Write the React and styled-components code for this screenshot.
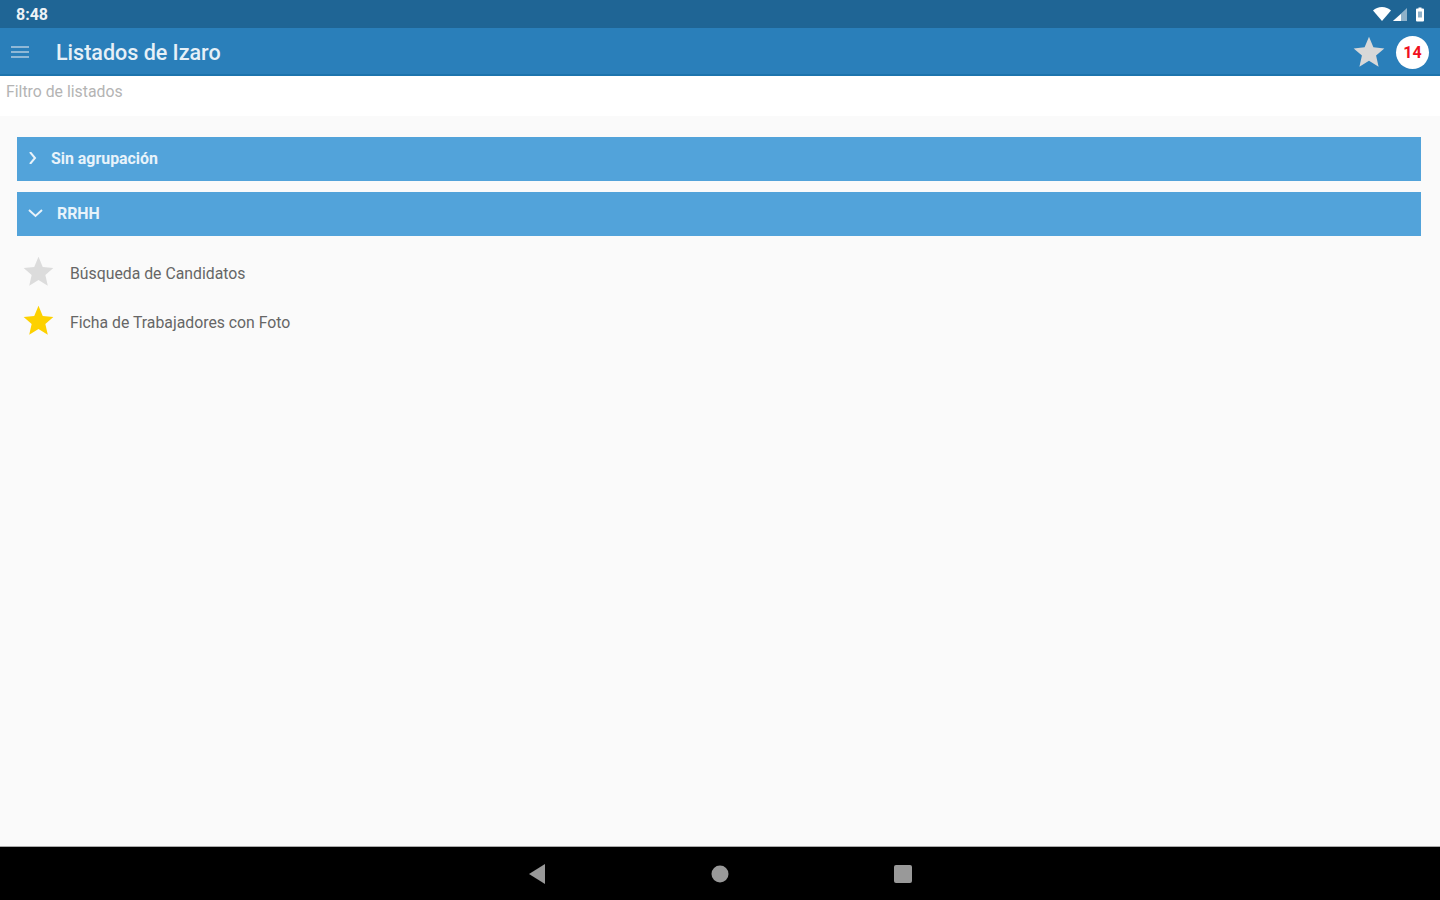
import React from 'react';
import styled, { createGlobalStyle } from 'styled-components';

const GlobalStyle = createGlobalStyle`
  html, body {
    margin: 0;
    padding: 0;
    background: #fafafa;
    font-family: Roboto, "Liberation Sans", sans-serif;
  }
`;

const Screen = styled.div`
  width: 1440px;
  height: 900px;
  display: flex;
  flex-direction: column;
  overflow: hidden;
  background: #fafafa;
`;

const StatusBar = styled.div`
  height: 28px;
  flex: none;
  background: #1f6595;
  color: #fff;
  display: flex;
  align-items: center;
  justify-content: space-between;
  padding: 0 16px;
`;

const Clock = styled.span`
  font-size: 16px;
  font-weight: 700;
  opacity: 0.92;
`;

const StatusIcons = styled.div`
  display: flex;
  align-items: center;
  gap: 2px;
`;

const Toolbar = styled.div`
  height: 44px;
  flex: none;
  background: #2a7fba;
  border-bottom: 2px solid #1d74ad;
  display: flex;
  align-items: center;
  padding: 2px 11px 0;
`;

const Menu = styled.div`
  width: 18px;
  display: flex;
  flex-direction: column;
  gap: 3px;
  margin-right: 27px;
`;

const MenuLine = styled.div`
  height: 2px;
  background: #8fb8d6;
`;

const Title = styled.h1`
  flex: 1;
  margin: 0;
  font-size: 21.5px;
  font-weight: 500;
  color: #e6f0f7;
`;

const Badge = styled.div`
  width: 33px;
  height: 33px;
  border-radius: 50%;
  background: #fff;
  color: #f01020;
  font-size: 16px;
  font-weight: 700;
  display: flex;
  align-items: center;
  justify-content: center;
  margin-left: 11px;
`;

const FilterBar = styled.div`
  height: 40px;
  flex: none;
  background: #fff;
  padding: 6px 6px 0;
  box-sizing: border-box;
  font-size: 15.8px;
  line-height: 19px;
  color: #b4b4b4;
`;

const Content = styled.div`
  flex: 1;
  padding: 21px 19px 0 17px;
`;

const GroupHeader = styled.div`
  height: 44px;
  background: #52a3da;
  color: #e8f3fa;
  display: flex;
  align-items: center;
  padding: 0 0 2px ${props => props.$indent}px;
  box-sizing: border-box;
  margin-bottom: 11px;
  font-size: 15.9px;
  font-weight: 700;
`;

const Chevron = styled.svg`
  width: ${props => props.$size}px;
  height: ${props => props.$size}px;
  margin-right: ${props => props.$gap}px;
  flex: none;
`;

const ListItems = styled.div`
  padding: 2px 0 0 6px;
`;

const ListItem = styled.div`
  height: 49px;
  display: flex;
  align-items: center;
  gap: 16px;
  font-size: 15.8px;
  color: #666;
`;

const StarBox = styled.span`
  flex: none;
  margin-top: -4px;
`;

const NavBar = styled.div`
  height: 54px;
  flex: none;
  background: #000;
  border-top: 1px solid #aaa;
  box-sizing: border-box;
  display: flex;
  align-items: center;
  justify-content: center;
  gap: 165px;
`;

const NavButton = styled.svg`
  width: 18px;
  height: 20px;
  display: block;
`;

const Star = ({ size, color }) => (
  <svg width={size} height={size} viewBox="0 0 24 24" style={{ display: 'block', flex: 'none' }}>
    <path fill={color} d="M12 .5l3.300 8 8.200.8-6.200 5.400 1.900 8.300-7.200-4.400-7.200 4.400 1.900-8.300L.5 9.300l8.200-.8z" />
  </svg>
);

const items = [
  { name: 'Búsqueda de Candidatos', color: '#dcdcdc' },
  { name: 'Ficha de Trabajadores con Foto', color: '#fdd100' },
];

export default function App() {
  return (
    <>
      <GlobalStyle />
      <Screen>
        <StatusBar>
          <Clock>8:48</Clock>
          <StatusIcons>
            <svg width="18" height="14" viewBox="0 0 18 14">
              <path fill="#fff" d="M0 3.500C2.400 1.300 5.500 0 9 0s6.600 1.300 9 3.500L9 14z" />
            </svg>
            <svg width="14" height="13" viewBox="0 0 14 13">
              <path fill="#8fb1c9" d="M14 0v13H0z" />
              <path fill="#fff" d="M8 6v7H0z" />
            </svg>
            <svg width="8" height="15" viewBox="0 0 8 14" style={{ marginLeft: 7 }}>
              <path fill="#fff" d="M2.500 0h3v1H7a1 1 0 011 1v11a1 1 0 01-1 1H1a1 1 0 01-1-1V2a1 1 0 011-1h1.500z" />
              <rect x="2" y="4" width="4" height="6" fill="#8fb1c9" />
            </svg>
          </StatusIcons>
        </StatusBar>
        <Toolbar>
          <Menu>
            <MenuLine />
            <MenuLine />
            <MenuLine />
          </Menu>
          <Title>Listados de Izaro</Title>
          <Star size={32} color="#d8d8d8" />
          <Badge>14</Badge>
        </Toolbar>
        <FilterBar>Filtro de listados</FilterBar>
        <Content>
          <GroupHeader $indent={10}>
            <Chevron $size={12} $gap={12} viewBox="0 0 12 12">
              <path d="M3 0l5 6-5 6" fill="none" stroke="#e8f3fa" strokeWidth="2" />
            </Chevron>
            Sin agrupación
          </GroupHeader>
          <GroupHeader $indent={11}>
            <Chevron $size={15} $gap={14} viewBox="0 0 15 15">
              <path d="M1 4l6.500 6L14 4" fill="none" stroke="#e8f3fa" strokeWidth="2" />
            </Chevron>
            RRHH
          </GroupHeader>
          <ListItems>
            {items.map(item => (
              <ListItem key={item.name}>
                <StarBox>
                  <Star size={31} color={item.color} />
                </StarBox>
                {item.name}
              </ListItem>
            ))}
          </ListItems>
        </Content>
        <NavBar>
          <NavButton viewBox="0 0 18 20">
            <path fill="#999" d="M17 0v20L1 10z" />
          </NavButton>
          <NavButton viewBox="0 0 18 20">
            <circle cx="9" cy="10" r="8.500" fill="#999" />
          </NavButton>
          <NavButton viewBox="0 0 18 20">
            <rect y="1" width="18" height="18" rx="2" fill="#999" />
          </NavButton>
        </NavBar>
      </Screen>
    </>
  );
}
